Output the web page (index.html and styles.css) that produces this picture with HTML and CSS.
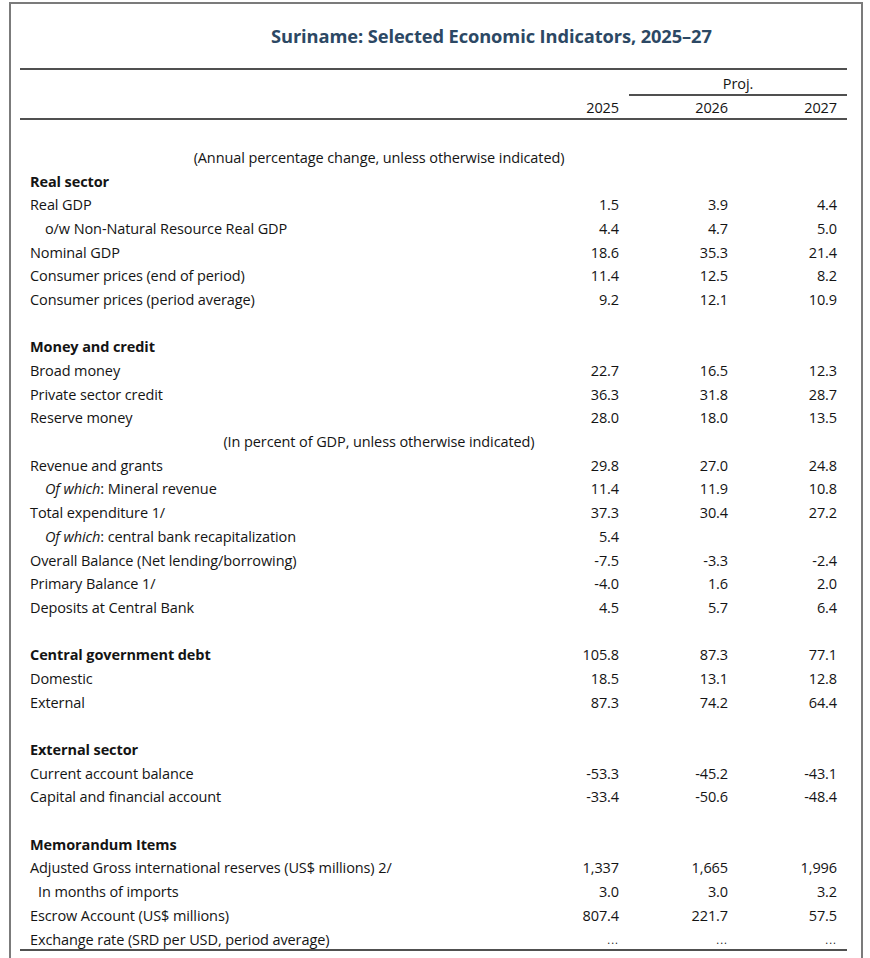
FILE: index.html
```html
<!DOCTYPE html>
<html lang="en">
<head>
<meta charset="UTF-8">
<meta name="viewport" content="width=device-width, initial-scale=1.0">
<title>Suriname: Selected Economic Indicators</title>
<link rel="stylesheet" href="styles.css">
</head>
<body>

<div class="frame">
    <h1 class="title">Suriname: Selected Economic Indicators, 2025–27</h1>

    <table class="indicators">
        <colgroup>
            <col class="col-label">
            <col class="col-num">
            <col class="col-num">
            <col class="col-num">
        </colgroup>
        <thead>
            <tr class="head-proj">
                <th></th>
                <th></th>
                <th colspan="2" class="proj">Proj.</th>
            </tr>
            <tr class="head-years">
                <th></th>
                <th class="num">2025</th>
                <th class="num">2026</th>
                <th class="num">2027</th>
            </tr>
        </thead>
        <tbody>
            <tr class="spacer"><td colspan="4"></td></tr>
            <tr class="note"><td colspan="3">(Annual percentage change, unless otherwise indicated)</td><td></td></tr>
            <tr class="section"><td>Real sector</td><td></td><td></td><td></td></tr>
            <tr><td>Real GDP</td><td class="num">1.5</td><td class="num">3.9</td><td class="num">4.4</td></tr>
            <tr><td class="indent">o/w Non-Natural Resource Real GDP</td><td class="num">4.4</td><td class="num">4.7</td><td class="num">5.0</td></tr>
            <tr><td>Nominal GDP</td><td class="num">18.6</td><td class="num">35.3</td><td class="num">21.4</td></tr>
            <tr><td>Consumer prices (end of period)</td><td class="num">11.4</td><td class="num">12.5</td><td class="num">8.2</td></tr>
            <tr><td>Consumer prices (period average)</td><td class="num">9.2</td><td class="num">12.1</td><td class="num">10.9</td></tr>
            <tr class="blank"><td colspan="4">&nbsp;</td></tr>
            <tr class="section"><td>Money and credit</td><td></td><td></td><td></td></tr>
            <tr><td>Broad money</td><td class="num">22.7</td><td class="num">16.5</td><td class="num">12.3</td></tr>
            <tr><td>Private sector credit</td><td class="num">36.3</td><td class="num">31.8</td><td class="num">28.7</td></tr>
            <tr><td>Reserve money</td><td class="num">28.0</td><td class="num">18.0</td><td class="num">13.5</td></tr>
            <tr class="note"><td colspan="3">(In percent of GDP, unless otherwise indicated)</td><td></td></tr>
            <tr><td>Revenue and grants</td><td class="num">29.8</td><td class="num">27.0</td><td class="num">24.8</td></tr>
            <tr><td class="indent"><em>Of which</em>: Mineral revenue</td><td class="num">11.4</td><td class="num">11.9</td><td class="num">10.8</td></tr>
            <tr><td>Total expenditure 1/</td><td class="num">37.3</td><td class="num">30.4</td><td class="num">27.2</td></tr>
            <tr><td class="indent"><em>Of which</em>: central bank recapitalization</td><td class="num">5.4</td><td class="num"></td><td class="num"></td></tr>
            <tr><td>Overall Balance (Net lending/borrowing)</td><td class="num">-7.5</td><td class="num">-3.3</td><td class="num">-2.4</td></tr>
            <tr><td>Primary Balance 1/</td><td class="num">-4.0</td><td class="num">1.6</td><td class="num">2.0</td></tr>
            <tr><td>Deposits at Central Bank</td><td class="num">4.5</td><td class="num">5.7</td><td class="num">6.4</td></tr>
            <tr class="blank"><td colspan="4">&nbsp;</td></tr>
            <tr class="section"><td>Central government debt</td><td class="num">105.8</td><td class="num">87.3</td><td class="num">77.1</td></tr>
            <tr><td>Domestic</td><td class="num">18.5</td><td class="num">13.1</td><td class="num">12.8</td></tr>
            <tr><td>External</td><td class="num">87.3</td><td class="num">74.2</td><td class="num">64.4</td></tr>
            <tr class="blank"><td colspan="4">&nbsp;</td></tr>
            <tr class="section"><td>External sector</td><td></td><td></td><td></td></tr>
            <tr><td>Current account balance</td><td class="num">-53.3</td><td class="num">-45.2</td><td class="num">-43.1</td></tr>
            <tr><td>Capital and financial account</td><td class="num">-33.4</td><td class="num">-50.6</td><td class="num">-48.4</td></tr>
            <tr class="blank"><td colspan="4">&nbsp;</td></tr>
            <tr class="section"><td>Memorandum Items</td><td></td><td></td><td></td></tr>
            <tr><td>Adjusted Gross international reserves (US$ millions) 2/</td><td class="num">1,337</td><td class="num">1,665</td><td class="num">1,996</td></tr>
            <tr><td class="indent-small">In months of imports</td><td class="num">3.0</td><td class="num">3.0</td><td class="num">3.2</td></tr>
            <tr><td>Escrow Account (US$ millions)</td><td class="num">807.4</td><td class="num">221.7</td><td class="num">57.5</td></tr>
            <tr class="last"><td>Exchange rate (SRD per USD, period average)</td><td class="num">...</td><td class="num">...</td><td class="num">...</td></tr>
        </tbody>
    </table>
</div>

</body>
</html>
```

FILE: styles.css
```css
body {
    margin: 0;
    padding: 0;
    background-color: #ffffff;
    color: #141414;
    font-family: "Open Sans", Arial, sans-serif;
    overflow: hidden;
}
.frame {
    margin: 2px 7px 0 9px;
    border: 2px solid #7b7b7b;
    height: 1000px;
    padding: 0 15px 0 9px;
}
.title {
    margin: 0;
    padding: 19px 0 0 251px;
    height: 45px;
    font-size: 18.3px;
    line-height: 26px;
    font-weight: 700;
    color: #2c4864;
    letter-spacing: -0.1px;
}
.indicators {
    width: 827px;
    border-collapse: collapse;
    table-layout: fixed;
    font-size: 14.5px;
    font-weight: 500;
    letter-spacing: -0.1px;
    border-top: 2px solid #505050;
}
.col-label {
    width: 500px;
}
.col-num {
    width: 109px;
}
.indicators th {
    font-weight: 500;
    padding: 0 10px 0 0;
}
.head-proj th {
    line-height: 20px;
    padding-top: 4px;
}
.head-proj .proj {
    text-align: center;
    padding: 4px 0 0 0;
    border-bottom: 2px solid #505050;
}
.head-years th {
    line-height: 20px;
    padding-top: 2px;
    border-bottom: 2px solid #505050;
}
.indicators td {
    height: 23.7px;
    padding: 0 10px 0 0;
    line-height: 18px;
    white-space: nowrap;
}
.indicators tbody td:first-child {
    padding-left: 10px;
}
.num {
    text-align: right;
}
.spacer td {
    height: 26px;
}
.note td:first-child {
    text-align: center;
}
.section td:first-child {
    font-weight: 700;
}
.indent {
    text-indent: 15px;
}
.indent-small {
    text-indent: 8px;
}
.indicators .last td {
    height: 17px;
    padding-top: 3px;
    vertical-align: top;
    border-bottom: 2px solid #505050;
}
.last .num {
    font-size: 11px;
    letter-spacing: 1px;
}
```
